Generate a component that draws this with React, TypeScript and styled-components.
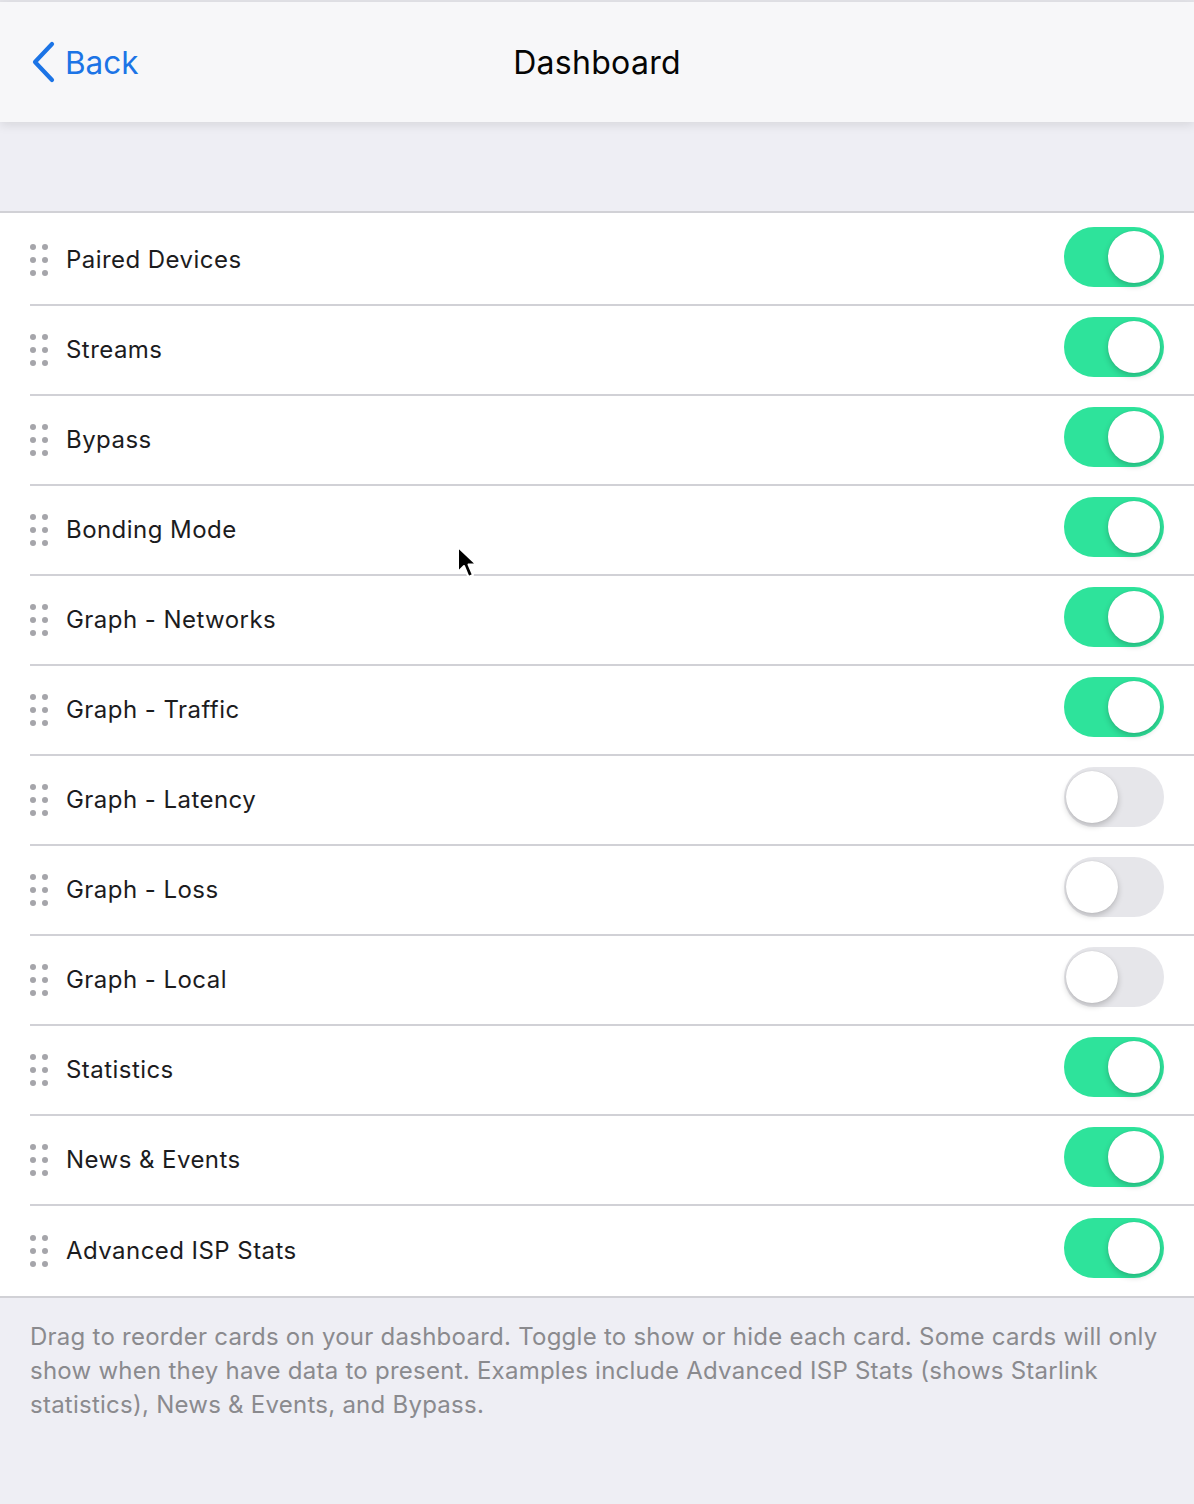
import React, { useState } from "react";
import styled, { createGlobalStyle } from "styled-components";

const GlobalStyle = createGlobalStyle`
  html, body {
    margin: 0;
    padding: 0;
    background: #eeeef4;
    font-family: Inter, "Open Sans", "Liberation Sans", sans-serif;
    -webkit-font-smoothing: antialiased;
  }
  * {
    box-sizing: border-box;
  }
`;

const Page = styled.div`
  position: relative;
  min-height: 1504px;
  background: #eeeef4;
  border-top: 2px solid #e4e4e9;
`;

const NavBar = styled.header`
  position: relative;
  z-index: 2;
  height: 120px;
  background: #f7f7f9;
  display: grid;
  grid-template-columns: 1fr auto 1fr;
  align-items: center;
  padding: 0 30px;
  box-shadow: 0 3px 10px rgba(0, 0, 0, 0.1);
`;

const BackButton = styled.button`
  display: flex;
  align-items: center;
  gap: 10px;
  background: none;
  border: none;
  padding: 0;
  color: #1c74e6;
  font-family: inherit;
  font-size: 31.5px;
  cursor: pointer;
  justify-self: start;
`;

const Title = styled.h1`
  margin: 0;
  font-size: 32px;
  font-weight: 400;
  color: #050505;
  letter-spacing: 0.3px;
`;

const Spacer = styled.div`
  height: 91px;
  border-bottom: 2px solid #d1d1d6;
`;

const List = styled.ul`
  list-style: none;
  margin: 0;
  padding: 3px 0 0 0;
  background: #ffffff;
  border-bottom: 2px solid #d1d1d6;
`;

const Row = styled.li<{ $last: boolean }>`
  display: flex;
  align-items: center;
  height: 90px;
  margin-left: 30px;
  padding-right: 30px;
  border-bottom: ${(p) => (p.$last ? "none" : "2px solid #d1d1d6")};
`;

const Handle = styled.div`
  display: grid;
  grid-template-columns: repeat(2, 6px);
  grid-auto-rows: 6px;
  column-gap: 6px;
  row-gap: 7px;
  margin-right: 18px;
`;

const Dot = styled.span`
  width: 6px;
  height: 6px;
  border-radius: 50%;
  background: #a5a5aa;
`;

const Label = styled.span`
  flex: 1;
  font-size: 24px;
  color: #1c1c1e;
  letter-spacing: 0.45px;
  margin-bottom: 2px;
`;

const Track = styled.button<{ $on: boolean }>`
  position: relative;
  width: 100px;
  height: 60px;
  border: none;
  border-radius: 30px;
  padding: 0;
  margin-bottom: 6px;
  cursor: pointer;
  background: ${(p) => (p.$on ? "#2ee39b" : "#e6e6ea")};
  transition: background 0.2s;
`;

const Knob = styled.span<{ $on: boolean }>`
  position: absolute;
  top: 4px;
  left: ${(p) => (p.$on ? "44px" : "2px")};
  width: 52px;
  height: 52px;
  border-radius: 50%;
  background: #ffffff;
  box-shadow: 0 3px 6px rgba(0, 0, 0, 0.2), 0 0 1px rgba(0, 0, 0, 0.15);
  transition: left 0.2s;
`;

const Footer = styled.p`
  margin: 0;
  padding: 22px 30px 0 30px;
  font-size: 24px;
  line-height: 34px;
  color: #8a8a8e;
  letter-spacing: 0.25px;
`;

const Cursor = styled.svg`
  position: absolute;
  left: 456px;
  top: 543px;
  z-index: 5;
`;

const cards = [
  { name: "Paired Devices", on: true },
  { name: "Streams", on: true },
  { name: "Bypass", on: true },
  { name: "Bonding Mode", on: true },
  { name: "Graph - Networks", on: true },
  { name: "Graph - Traffic", on: true },
  { name: "Graph - Latency", on: false },
  { name: "Graph - Loss", on: false },
  { name: "Graph - Local", on: false },
  { name: "Statistics", on: true },
  { name: "News & Events", on: true },
  { name: "Advanced ISP Stats", on: true },
];

function Toggle({ on, onClick }: { on: boolean; onClick: () => void }) {
  return (
    <Track $on={on} onClick={onClick} aria-pressed={on}>
      <Knob $on={on} />
    </Track>
  );
}

export default function App() {
  const [items, setItems] = useState(cards);

  const flip = (i: number) =>
    setItems((prev) => prev.map((c, j) => (j === i ? { ...c, on: !c.on } : c)));

  return (
    <Page>
      <GlobalStyle />
      <NavBar>
        <BackButton>
          <svg width="25" height="42" viewBox="0 0 25 42">
            <path
              d="M22 3 L5 21 L22 39"
              fill="none"
              stroke="#1c74e6"
              strokeWidth="4.2"
              strokeLinecap="round"
              strokeLinejoin="round"
            />
          </svg>
          Back
        </BackButton>
        <Title>Dashboard</Title>
        <div />
      </NavBar>
      <Spacer />
      <List>
        {items.map((c, i) => (
          <Row key={c.name} $last={i === items.length - 1}>
            <Handle>
              {Array.from({ length: 6 }).map((_, k) => (
                <Dot key={k} />
              ))}
            </Handle>
            <Label>{c.name}</Label>
            <Toggle on={c.on} onClick={() => flip(i)} />
          </Row>
        ))}
      </List>
      <Footer>
        Drag to reorder cards on your dashboard. Toggle to show or hide each
        card. Some cards will only show when they have data to present.
        Examples include Advanced ISP Stats (shows Starlink statistics), News
        &amp; Events, and Bypass.
      </Footer>
      <Cursor width="24" height="38" viewBox="0 0 24 38">
        <path
          d="M2 2 L2 27 L8 21 L12.5 32 L17 30 L12.5 19.5 L20.5 19.5 Z"
          fill="#000"
          stroke="#fff"
          strokeWidth="2"
          strokeLinejoin="round"
        />
      </Cursor>
    </Page>
  );
}
